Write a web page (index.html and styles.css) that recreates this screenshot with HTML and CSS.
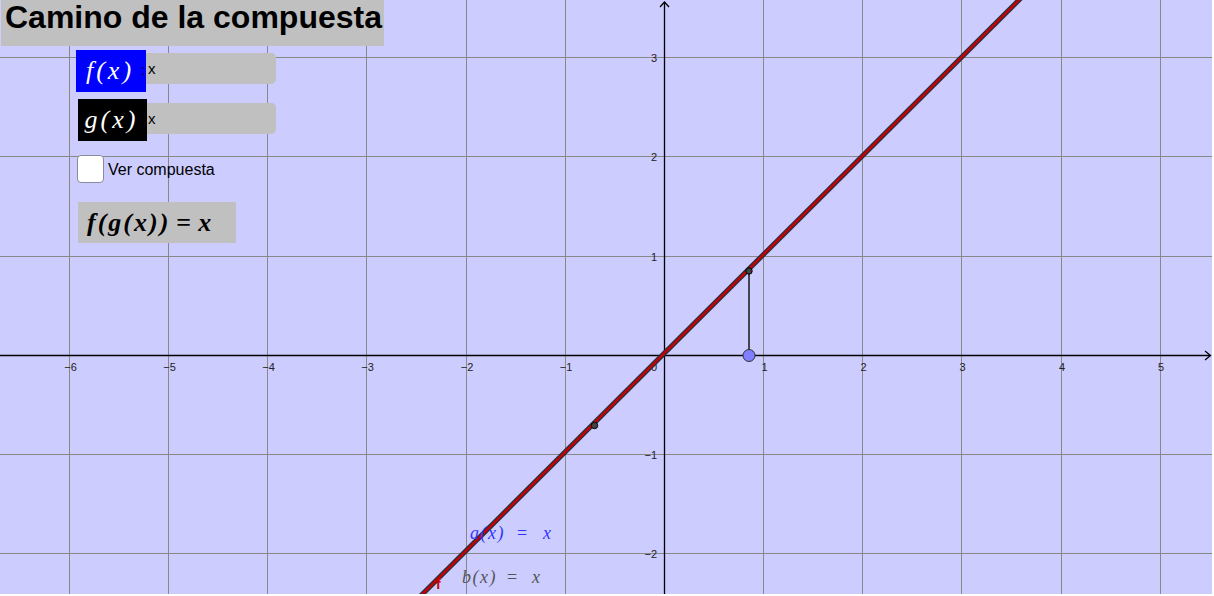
FILE: index.html
```html
<!DOCTYPE html>
<html lang="es">
<head>
<meta charset="utf-8">
<title>Camino de la compuesta</title>
<link rel="stylesheet" href="styles.css">
</head>
<body>
<div class="applet">
  <svg class="graph" width="1212" height="594" viewBox="0 0 1212 594" xmlns="http://www.w3.org/2000/svg">
    <g class="grid" stroke="#888888" stroke-width="1">
      <line x1="69.5" y1="0" x2="69.5" y2="594"/>
      <line x1="168.5" y1="0" x2="168.5" y2="594"/>
      <line x1="267.5" y1="0" x2="267.5" y2="594"/>
      <line x1="366.5" y1="0" x2="366.5" y2="594"/>
      <line x1="466.5" y1="0" x2="466.5" y2="594"/>
      <line x1="565.5" y1="0" x2="565.5" y2="594"/>
      <line x1="763.5" y1="0" x2="763.5" y2="594"/>
      <line x1="862.5" y1="0" x2="862.5" y2="594"/>
      <line x1="961.5" y1="0" x2="961.5" y2="594"/>
      <line x1="1061.5" y1="0" x2="1061.5" y2="594"/>
      <line x1="1160.5" y1="0" x2="1160.5" y2="594"/>
      <line x1="0" y1="57.5" x2="1212" y2="57.5"/>
      <line x1="0" y1="156.5" x2="1212" y2="156.5"/>
      <line x1="0" y1="256.5" x2="1212" y2="256.5"/>
      <line x1="0" y1="454.5" x2="1212" y2="454.5"/>
      <line x1="0" y1="553.5" x2="1212" y2="553.5"/>
    </g>
    <g class="axes" stroke="#000" stroke-width="1.3" fill="none">
      <line x1="664.5" y1="2" x2="664.5" y2="594"/>
      <polyline points="660,7 664.5,2 669,7"/>
      <line x1="0" y1="355.5" x2="1210" y2="355.5"/>
      <polyline points="1205,351 1210.5,355.5 1205,360"/>
    </g>
    <g class="ticklabels" font-family="Liberation Sans, Arial, sans-serif" font-size="11" fill="#222">
      <text x="70.5" y="371" text-anchor="middle">−6</text>
      <text x="169.5" y="371" text-anchor="middle">−5</text>
      <text x="268.5" y="371" text-anchor="middle">−4</text>
      <text x="367.5" y="371" text-anchor="middle">−3</text>
      <text x="467" y="371" text-anchor="middle">−2</text>
      <text x="566" y="371" text-anchor="middle">−1</text>
      <text x="657" y="371" text-anchor="end">0</text>
      <text x="764.5" y="371" text-anchor="middle">1</text>
      <text x="863.5" y="371" text-anchor="middle">2</text>
      <text x="962.5" y="371" text-anchor="middle">3</text>
      <text x="1062" y="371" text-anchor="middle">4</text>
      <text x="1161" y="371" text-anchor="middle">5</text>
      <text x="657" y="62" text-anchor="end">3</text>
      <text x="657" y="161" text-anchor="end">2</text>
      <text x="657" y="261" text-anchor="end">1</text>
      <text x="657" y="459" text-anchor="end">−1</text>
      <text x="657" y="558" text-anchor="end">−2</text>
    </g>
    <g class="curves">
      <line x1="412.5" y1="604" x2="1026" y2="-7" stroke="#2e2e3e" stroke-width="5"/>
      <line x1="412.5" y1="604" x2="1026" y2="-7" stroke="#cc0000" stroke-width="2.2"/>
    </g>
    <line x1="749" y1="271" x2="749" y2="355" stroke="#222" stroke-width="1.6"/>
    <circle cx="749" cy="271" r="3.2" fill="#444" stroke="#000" stroke-width="1"/>
    <circle cx="594.5" cy="425.5" r="3.2" fill="#444" stroke="#000" stroke-width="1"/>
    <circle cx="749" cy="355.5" r="6" fill="#7f7fff" stroke="#333" stroke-width="1"/>
    <g font-family="Liberation Serif, serif" font-style="italic" font-size="18">
      <text y="539" fill="#3333ff"><tspan x="470" letter-spacing="1.5">a(x)</tspan><tspan x="517" font-style="normal">=</tspan><tspan x="543">x</tspan></text>
      <text y="583" fill="#555555"><tspan x="462" letter-spacing="1.5">b(x)</tspan><tspan x="507" font-style="normal">=</tspan><tspan x="532">x</tspan></text>
    </g>
    <text x="436" y="589" font-family="Liberation Sans, Arial, sans-serif" font-weight="bold" font-size="14" fill="#cc0000">f</text>
  </svg>

  <div class="panel">
    <h1 class="title">Camino de la compuesta</h1>
    <div class="controls">
      <div class="func-row">
        <span class="fname fname-f"><span class="math">f(x)</span><span class="colon">:</span></span>
        <span class="input">x</span>
      </div>
      <div class="func-row func-row-g">
        <span class="fname fname-g"><span class="math">g(x)</span></span>
        <span class="input">x</span>
      </div>
      <label class="check-row">
        <span class="checkbox"></span>
        <span class="check-text">Ver compuesta</span>
      </label>
      <div class="formula"><span class="math bold">f(g(x))</span><span class="eq">=</span><span class="math bold">x</span></div>
    </div>
  </div>
</div>
</body>
</html>
```

FILE: styles.css
```css
html, body {
  margin: 0;
  padding: 0;
  background: #ffffff;
}

.applet {
  position: relative;
  width: 1212px;
  height: 594px;
  background: #ccccff;
  overflow: hidden;
  font-family: "Liberation Sans", Arial, sans-serif;
}

.graph {
  position: absolute;
  left: 0;
  top: 0;
  display: block;
}

.panel {
  position: absolute;
  left: 1px;
  top: 0;
  display: flex;
  flex-direction: column;
  align-items: flex-start;
}

.title {
  margin: 0;
  width: 383px;
  height: 46px;
  box-sizing: border-box;
  padding: 0 0 0 4px;
  background: #c0c0c0;
  color: #000;
  font-family: "Liberation Sans", Arial, sans-serif;
  font-weight: bold;
  font-size: 32px;
  line-height: 35px;
  white-space: nowrap;
}

.controls {
  margin-left: 75px;
  margin-top: 4px;
  display: flex;
  flex-direction: column;
  align-items: flex-start;
}

.func-row {
  display: flex;
  align-items: flex-start;
  height: 42px;
}

.func-row-g {
  margin-top: 7px;
  margin-left: 2px;
}

.fname {
  position: relative;
  display: flex;
  align-items: center;
  justify-content: center;
  width: 70px;
  height: 42px;
  padding-right: 2px;
  color: #ffffff;
  box-sizing: border-box;
}

.fname-f {
  background: #0000ff;
}

.fname-g {
  background: #000000;
  width: 69px;
}

.math {
  font-family: "Liberation Serif", "Times New Roman", serif;
  font-style: italic;
  font-size: 26px;
  letter-spacing: 3px;
  line-height: 30px;
}

.colon {
  position: absolute;
  right: 1px;
  top: 12px;
  color: #000;
  font-family: "Liberation Sans", Arial, sans-serif;
  font-size: 14px;
  line-height: 16px;
}

.input {
  display: flex;
  align-items: center;
  width: 130px;
  height: 31px;
  margin-top: 3px;
  box-sizing: border-box;
  padding-left: 2px;
  background: #c0c0c0;
  border-radius: 0 5px 5px 0;
  color: #000;
  font-family: "Liberation Sans", Arial, sans-serif;
  font-size: 15px;
}

.func-row-g .input {
  margin-top: 4px;
  margin-left: -1px;
}

.check-row {
  display: flex;
  align-items: center;
  margin-top: 14px;
  margin-left: 1px;
  gap: 4px;
}

.checkbox {
  display: block;
  width: 27px;
  height: 28px;
  box-sizing: border-box;
  background: #ffffff;
  border: 1px solid #8a8a9a;
  border-radius: 4px;
}

.check-text {
  font-family: "Liberation Sans", Arial, sans-serif;
  font-size: 16px;
  color: #000;
  margin-top: 1px;
}

.formula {
  margin-top: 19px;
  margin-left: 2px;
  width: 158px;
  height: 41px;
  box-sizing: border-box;
  padding-left: 9px;
  display: flex;
  align-items: center;
  justify-content: flex-start;
  background: #c0c0c0;
  color: #000;
}

.formula .math {
  letter-spacing: 2px;
}

.eq {
  font-family: "Liberation Serif", "Times New Roman", serif;
  font-weight: bold;
  font-size: 26px;
  margin: 0 7px 0 6px;
}

.bold {
  font-weight: bold;
}
```
